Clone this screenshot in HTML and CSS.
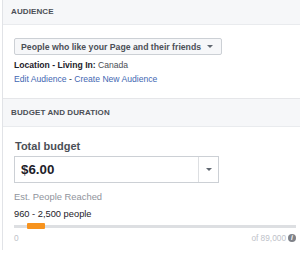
FILE: index.html
```html
<!DOCTYPE html>
<html lang="en">
<head>
  <meta charset="UTF-8">
  <title>Audience and budget</title>
  <link rel="stylesheet" href="styles.css">
</head>
<body>
  <div class="panel">
    <section class="section">
      <div class="section-head head-top">Audience</div>
      <div class="section-body audience">
        <button class="select">People who like your Page and their friends <span class="caret"></span></button>
        <p class="location"><b>Location - Living In:</b> Canada</p>
        <p class="links"><a href="#">Edit Audience</a> - <a href="#">Create New Audience</a></p>
      </div>
    </section>
    <section class="section">
      <div class="section-head">Budget and duration</div>
      <div class="section-body budget">
        <label class="field-label">Total budget</label>
        <div class="amount">
          <span class="amount-value">$6.00</span>
          <span class="amount-drop"><span class="caret"></span></span>
        </div>
        <p class="reach-label">Est. People Reached</p>
        <p class="reach-value">960 - 2,500 people</p>
        <div class="track"><span class="track-fill"></span></div>
        <div class="scale">
          <span>0</span>
          <span class="scale-max">of 89,000 <span class="info">i</span></span>
        </div>
      </div>
    </section>
  </div>
</body>
</html>
```

FILE: styles.css
```css
* { box-sizing: border-box; }
body {
  margin: 0;
  font-family: "Liberation Sans", Arial, sans-serif;
  color: #1d2129;
  background: #fff;
}
p { margin: 0; }
a { color: #4267b2; text-decoration: none; }
.panel {
  margin-left: 2px;
  width: 298px;
  border-left: 1px solid #e1e3e7;
}
.section {
  border-top: 1px solid #e5e6e9;
}
.section:first-child { border-top: none; }
.section-head {
  height: 28px;
  line-height: 27px;
  padding-left: 8px;
  background: #f6f7f9;
  border-bottom: 1px solid #e9ebee;
  font-size: 8px;
  font-weight: bold;
  text-transform: uppercase;
  color: #4b4f56;
  letter-spacing: 0.1px;
}
.head-top {
  height: 25px;
  line-height: 23px;
}
.section-body {
  padding: 0 4px 0 11px;
}
.audience {
  padding-top: 13px;
  padding-bottom: 13px;
}
.select {
  display: flex;
  align-items: center;
  gap: 6px;
  width: 208px;
  height: 17px;
  padding: 0 0 0 6px;
  border: 1px solid #ccd0d5;
  border-radius: 2px;
  background: #f6f7f9;
  font-family: inherit;
  font-size: 8.7px;
  font-weight: bold;
  color: #4b4f56;
}
.caret {
  display: inline-block;
  width: 0;
  height: 0;
  border-left: 3px solid transparent;
  border-right: 3px solid transparent;
  border-top: 3px solid #606770;
}
.location {
  margin-top: 4px;
  line-height: 12px;
  font-size: 8.6px;
  color: #4b4f56;
}
.location b { color: #1d2129; }
.links {
  margin-top: 2px;
  line-height: 12px;
  font-size: 8.6px;
}
.budget {
  padding-top: 12px;
  padding-bottom: 7px;
}
.field-label {
  display: block;
  margin-left: 1px;
  line-height: 14px;
  font-size: 11px;
  font-weight: bold;
  color: #4b4f56;
}
.amount {
  display: flex;
  margin-top: 3px;
  width: 205px;
  height: 27px;
  border: 1px solid #ccd0d5;
}
.amount-value {
  flex: 1;
  padding-left: 6px;
  line-height: 25px;
  font-size: 13.3px;
  font-weight: bold;
  color: #1d2129;
}
.amount-drop {
  width: 20px;
  display: flex;
  align-items: center;
  justify-content: center;
  border-left: 1px solid #dddfe2;
}
.reach-label {
  margin-top: 8px;
  line-height: 12px;
  font-size: 9.4px;
  color: #90949c;
}
.reach-value {
  margin-top: 5px;
  line-height: 12px;
  font-size: 9.3px;
  color: #1d2129;
}
.track {
  position: relative;
  margin-top: 5px;
  height: 3px;
  background: #dddfe2;
}
.track-fill {
  position: absolute;
  left: 13px;
  top: -2px;
  width: 18px;
  height: 6px;
  background: #f7931e;
  border-radius: 1px;
}
.scale {
  display: flex;
  justify-content: space-between;
  margin-top: 5px;
  line-height: 10px;
  font-size: 8.3px;
  color: #bec2c9;
}
.scale-max {
  display: flex;
  align-items: center;
  gap: 2px;
}
.info {
  display: inline-block;
  width: 8px;
  height: 8px;
  line-height: 8px;
  border-radius: 50%;
  background: #7f8289;
  color: #fff;
  font-size: 6.5px;
  font-weight: bold;
  font-style: italic;
  text-align: center;
}
```
